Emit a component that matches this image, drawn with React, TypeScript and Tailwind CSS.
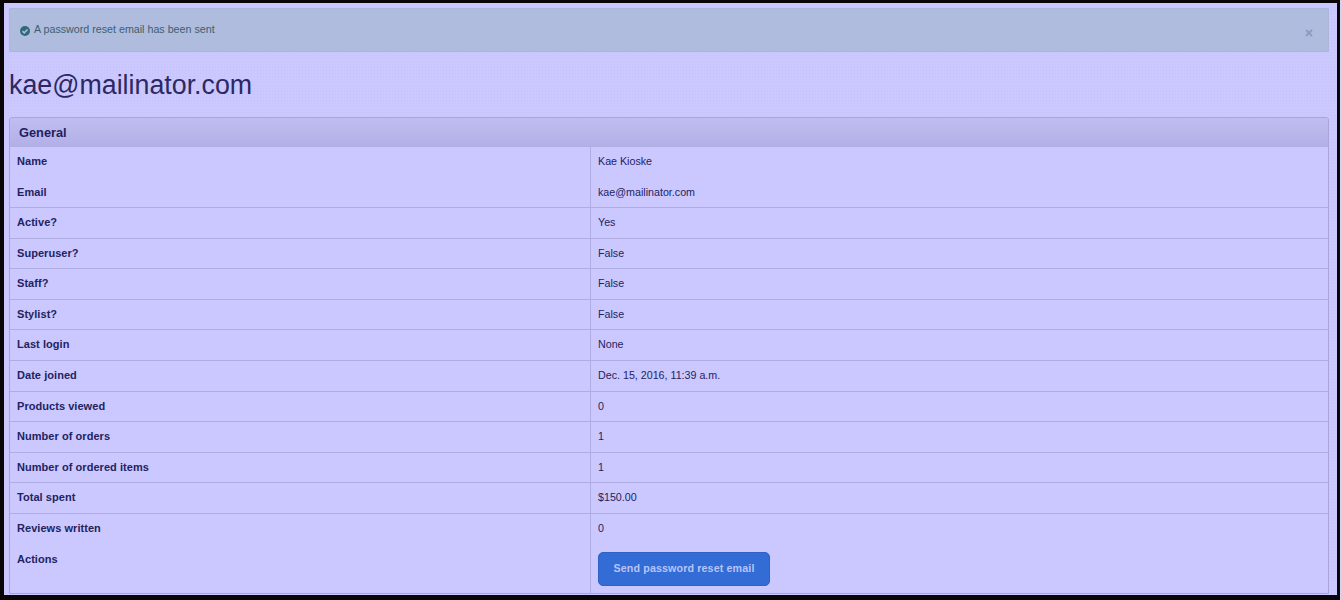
import React from "react";

const rows: [string, string, boolean, string, string][] = [
  ["Name", "Kae Kioske", false, "h-[29.6px]", "pt-[7px]"],
  ["Email", "kae@mailinator.com", false, "h-[30.57px]", "pt-[8px]"],
  ["Active?", "Yes", true, "h-[30.57px]", "pt-[7px]"],
  ["Superuser?", "False", true, "h-[30.57px]", "pt-[7px]"],
  ["Staff?", "False", true, "h-[30.57px]", "pt-[7px]"],
  ["Stylist?", "False", true, "h-[30.57px]", "pt-[7px]"],
  ["Last login", "None", true, "h-[30.57px]", "pt-[7px]"],
  ["Date joined", "Dec. 15, 2016, 11:39 a.m.", true, "h-[30.57px]", "pt-[7px]"],
  ["Products viewed", "0", true, "h-[30.57px]", "pt-[7px]"],
  ["Number of orders", "1", true, "h-[30.57px]", "pt-[7px]"],
  ["Number of ordered items", "1", true, "h-[30.57px]", "pt-[7px]"],
  ["Total spent", "$150.00", true, "h-[30.57px]", "pt-[7px]"],
  ["Reviews written", "0", true, "h-[30.57px]", "pt-[7px]"],
];

export default function App() {
  return (
    <div className="h-[600px] w-full overflow-hidden border-r border-[#d5d4ee] bg-[#0a0608] pt-[3px] pl-[4px] pr-[3px] pb-[5px] font-['Liberation_Sans',Arial,sans-serif]">
      <div className="h-full overflow-hidden bg-[#cac8ff] bg-[radial-gradient(#c4c2f6_0.6px,transparent_0.8px)] bg-[length:3px_3px] pl-[5px] pr-[8px] pt-[5px]">
        <div className="relative flex h-[44px] items-start rounded-[1px] border border-[#a9b7d8] bg-[#b0bcdd] pl-[10px] pt-[13px] text-[10.7px] leading-[14px] text-[#3a6070]">
          <svg viewBox="0 0 16 16" className="mr-[4px] mt-[4px] h-[10px] w-[10px] shrink-0">
            <circle cx="8" cy="8" r="8" fill="#2f6a78" />
            <path d="M4 8.2l2.8 2.8L12 5.6" fill="none" stroke="#b0bcdd" strokeWidth="2.4" />
          </svg>
          <span>A password reset email has been sent</span>
          <svg viewBox="0 0 8 8" className="absolute right-[15px] top-[20px] h-[8px] w-[8px]">
            <path d="M1 1l6 6M7 1L1 7" fill="none" stroke="#8d9cc5" strokeWidth="2" />
          </svg>
        </div>
        <h1 className="mt-[18px] mb-[17px] text-[26.8px] font-normal leading-[30px] text-[#2d2863]">kae@mailinator.com</h1>
        <div className="overflow-hidden rounded-t-[3px] border border-[#a8a5dc] bg-[#cac8ff] text-[#23235f]">
          <div className="flex h-[29px] items-center border-b border-[#b0aee2] bg-gradient-to-b from-[#bfbdf2] to-[#b2b0e6] px-[9px] pt-[2px] text-[12.8px] font-bold text-[#24205e]">
            General
          </div>
          <div className="flex flex-col">
            {rows.map(([k, v, line, h, pad]) => (
              <div key={k} className={"flex " + h + " " + (line ? "border-t border-[#aeace0]" : "")}>
                <div className={"w-[581px] border-r border-[#aeace0] pl-[7px] text-[11px] font-bold leading-[14px] tracking-[0.05px] " + pad}>{k}</div>
                <div className={"flex-1 pl-[7px] text-[10.7px] leading-[14px] " + pad}>{v}</div>
              </div>
            ))}
            <div className="flex h-[50px]">
              <div className="w-[581px] border-r border-[#aeace0] pl-[7px] pt-[9px] text-[11px] font-bold leading-[14px] tracking-[0.05px]">Actions</div>
              <div className="flex-1 pl-[7px] pt-[8.5px]">
                <button className="h-[34px] w-[172px] rounded-[5px] border border-[#2f62c4] bg-[#346cd6] pb-[1px] text-[10.7px] font-bold tracking-[0.13px] text-[#b6c4fa]">
                  Send password reset email
                </button>
              </div>
            </div>
          </div>
        </div>
      </div>
    </div>
  );
}
